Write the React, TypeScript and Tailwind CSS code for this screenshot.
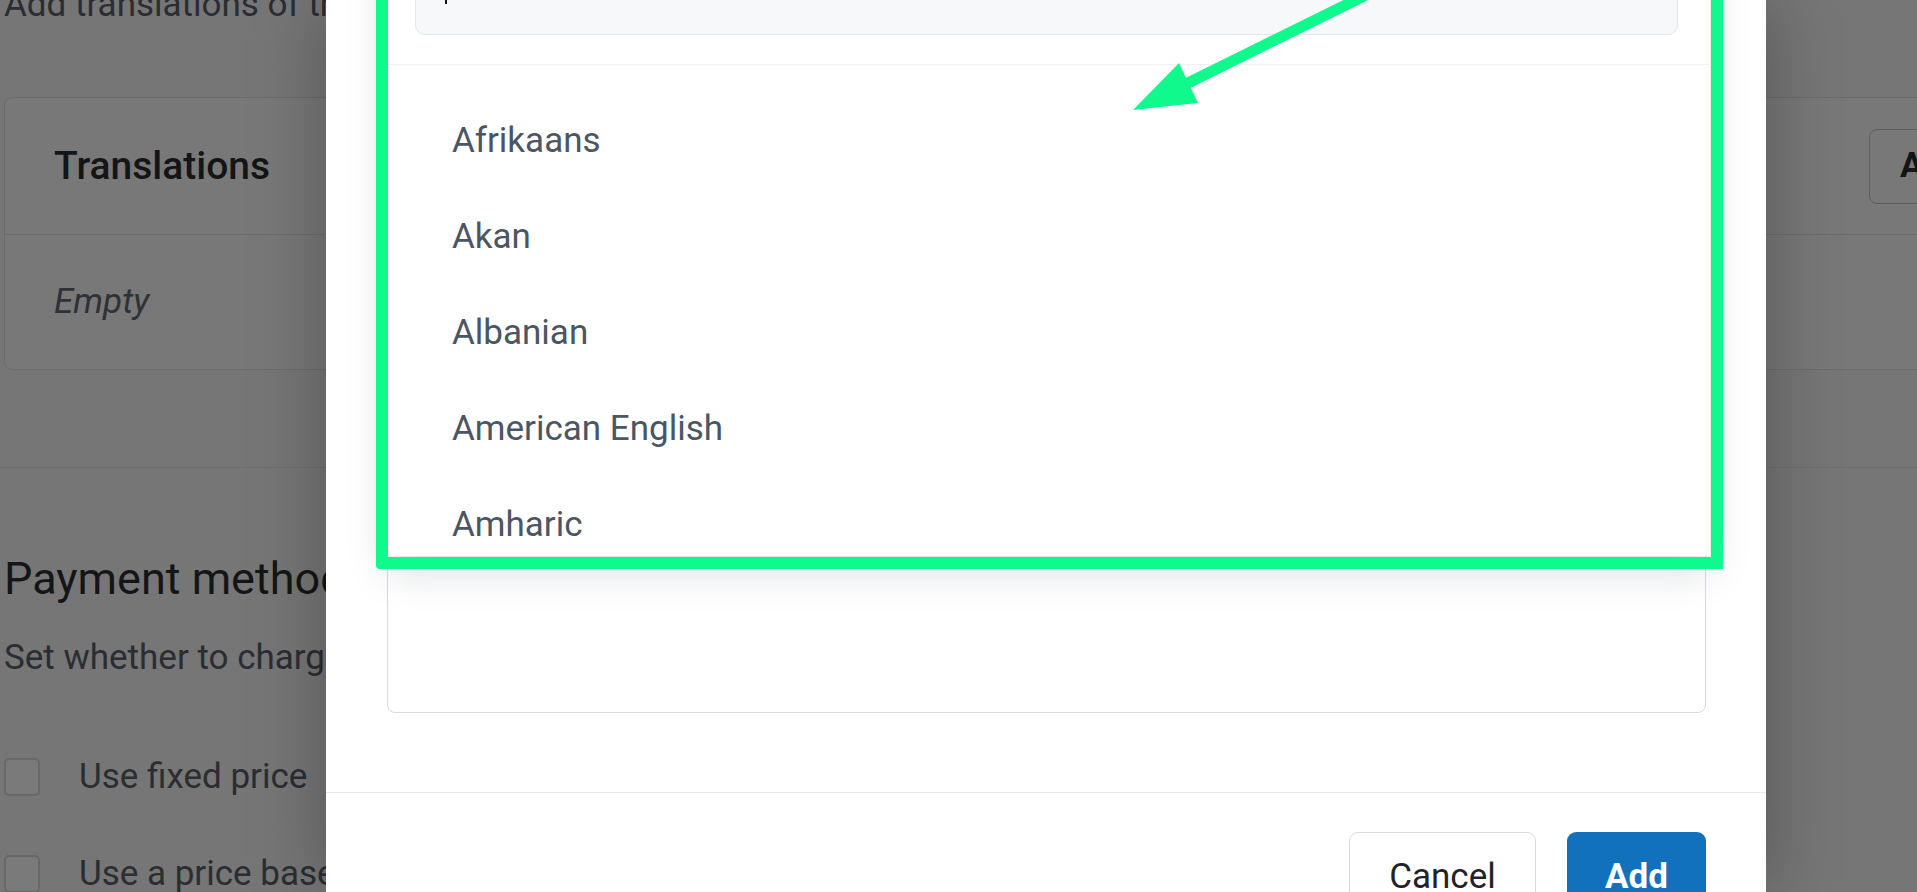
import React from 'react';

const languages = ['Afrikaans', 'Akan', 'Albanian', 'American English', 'Amharic', 'Arabic'];

// page behind the modal, dimmed by the overlay
const BackgroundPage: React.FC = () => (
  <div className="flex flex-col pl-[4px] w-[2300px] mt-[-21px]">
    <p className="text-[35px] leading-[52px] text-[#2a2d31] whitespace-nowrap">
      Add translations of the item name and description in other languages.
    </p>

    <div className="mt-[66px] w-[2216px] rounded-[8px] border border-[#6c6c6c] bg-[#787878]">
      <div className="h-[137px] flex items-center pl-[49px] pr-[50px] border-b border-[#6c6c6c]">
        <span className="text-[39px] font-medium text-[#141517]">Translations</span>
        <div className="flex-1" />
        <button className="w-[300px] h-[75px] rounded-[8px] border border-[#5c5d5e] text-left pl-[30px] text-[35px] font-bold text-[#141517] whitespace-nowrap">
          Add translation
        </button>
      </div>
      <div className="h-[134px] flex items-center pl-[49px]">
        <span className="text-[35px] italic text-[#2e3135]">Empty</span>
      </div>
    </div>

    <div className="mt-[97px] -ml-[4px] h-px bg-[#6c6c6c]" />

    <h2 className="mt-[84px] text-[45px] leading-[54px] text-[#141517] whitespace-nowrap">Payment methods</h2>
    <p className="mt-[26px] text-[35px] leading-[52px] text-[#2a2d31] whitespace-nowrap">
      Set whether to charge a fixed price or a price based on usage.
    </p>

    <div className="mt-[74px] flex items-center gap-[39px] h-[38px]">
      <div className="w-[36px] h-[38px] rounded-[5px] border-2 border-[#666869] bg-[#7a7a7a]" />
      <span className="text-[35px] text-[#2a2d31] whitespace-nowrap">Use fixed price</span>
    </div>
    <div className="mt-[59px] flex items-center gap-[39px] h-[38px]">
      <div className="w-[36px] h-[38px] rounded-[5px] border-2 border-[#666869] bg-[#7a7a7a]" />
      <span className="text-[35px] text-[#2a2d31] whitespace-nowrap">Use a price based on usage</span>
    </div>
  </div>
);

const LanguageDropdown: React.FC = () => (
  <div className="absolute left-[61px] top-[-60px] w-[1323px] h-[616px] overflow-hidden bg-white shadow-[0_14px_40px_rgba(15,23,42,0.16)]">
    <div className="pt-[15px] pb-[29px] pl-[28px] pr-[32px] border-b border-[#eef0f3]">
      <div className="h-[80px] flex items-center pl-[29px] rounded-[10px] border border-[#e3e6ea] bg-[#f7f8fa]">
        <span className="w-[2px] h-[34px] mb-[16px] bg-[#111]" />
      </div>
    </div>
    <ul className="pt-[28px]">
      {languages.map((lang) => (
        <li key={lang} className="h-[96px] flex items-center pl-[65px] text-[35px] text-[#4b5563]">
          {lang}
        </li>
      ))}
    </ul>
  </div>
);

const AddTranslationModal: React.FC = () => (
  <div className="absolute left-[326px] top-0 w-[1440px] h-[892px] flex flex-col bg-white shadow-[0_0_70px_rgba(0,0,0,0.28)]">
    <div className="relative h-[792px] shrink-0 flex flex-col justify-end pl-[61px] pr-[60px] pb-[79px]">
      <div className="h-[300px] rounded-[8px] border border-[#d6dae0] bg-white" />
      <LanguageDropdown />
    </div>
    <div className="flex-1 min-h-0 overflow-hidden border-t border-[#e5e8ec] pt-[39px] pr-[60px] flex justify-end items-start gap-[31px]">
      <button className="shrink-0 w-[187px] h-[90px] rounded-[9px] border border-[#d6dae0] bg-white text-[35px] text-[#1f2329]">
        Cancel
      </button>
      <button className="shrink-0 w-[139px] h-[90px] rounded-[9px] bg-[#1271bd] text-[35px] font-bold text-white">
        Add
      </button>
    </div>
  </div>
);

// green highlight box + arrow drawn on top of the screenshot
const Annotation: React.FC = () => (
  <>
    <div className="absolute left-[376px] top-[-20px] w-[1347px] h-[589px] border-[12px] border-[#10f98c] rounded-bl-[4px]" />
    <svg className="absolute inset-0 pointer-events-none" width="1917" height="892" viewBox="0 0 1917 892">
      <line x1="1372" y1="-8" x2="1186" y2="84" stroke="#10f98c" strokeWidth="11" />
      <polygon points="1133,110 1179,63 1198,103" fill="#10f98c" />
    </svg>
  </>
);

export default function App() {
  return (
    <div className="relative w-[1917px] h-[892px] overflow-hidden bg-[#767676] font-[Roboto,sans-serif]">
      <BackgroundPage />
      <AddTranslationModal />
      <Annotation />
    </div>
  );
}
